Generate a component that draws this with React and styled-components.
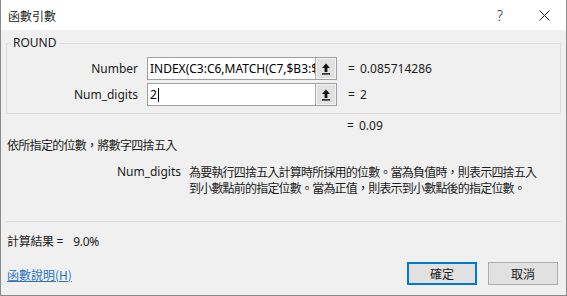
import React from 'react';
import styled, { createGlobalStyle } from 'styled-components';

const GlobalStyle = createGlobalStyle`
  html, body {
    margin: 0;
    padding: 0;
    background: #ffffff;
  }
  body {
    font-family: "Noto Sans", "Noto Sans CJK TC", sans-serif;
    font-size: 12px;
    color: #1b1b1b;
  }
`;

function RefArrow() {
  return (
    <svg width="10" height="12" viewBox="0 0 10 12">
      <path d="M5 0.5 L9 5 L6.4 5 L6.4 9 L3.6 9 L3.6 5 L1 5 Z" fill="#111" />
      <rect x="1" y="10.2" width="8" height="1.4" fill="#111" />
    </svg>
  );
}

function CloseIcon() {
  return (
    <svg width="11" height="11" viewBox="0 0 11 11">
      <path d="M0.5 0.5 L10.5 10.5 M10.5 0.5 L0.5 10.5" stroke="#222" strokeWidth="1" />
    </svg>
  );
}

function ArgInput({ value, caret }) {
  return (
    <InputBox>
      <InputText>
        {value}
        {caret && <Caret />}
      </InputText>
      <RefButton>
        <RefArrow />
      </RefButton>
    </InputBox>
  );
}

export default function App() {
  return (
    <>
      <GlobalStyle />
      <Window>
        <TitleBar>
          <Title>函數引數</Title>
          <TitleTools>
            <HelpGlyph>?</HelpGlyph>
            <CloseIcon />
          </TitleTools>
        </TitleBar>
        <Body>
          <Group>
            <Legend>ROUND</Legend>
            <ArgRow>
              <ArgLabel>Number</ArgLabel>
              <ArgInput value="INDEX(C3:C6,MATCH(C7,$B3:$" />
              <Eq>=</Eq>
              <Value>0.085714286</Value>
            </ArgRow>
            <ArgRow>
              <ArgLabel>Num_digits</ArgLabel>
              <ArgInput value="2" caret />
              <Eq>=</Eq>
              <Value>2</Value>
            </ArgRow>
          </Group>
          <ResultRow>
            <Eq>=</Eq>
            <Value>0.09</Value>
          </ResultRow>
          <Description>依所指定的位數，將數字四捨五入</Description>
          <ArgHelp>
            <ArgHelpLabel>Num_digits</ArgHelpLabel>
            <ArgHelpText>
              為要執行四捨五入計算時所採用的位數。當為負值時，則表示四捨五入
              <br />
              到小數點前的指定位數。當為正值，則表示到小數點後的指定位數。
            </ArgHelpText>
          </ArgHelp>
          <Divider />
          <Formula>
            計算結果 =<FormulaValue>9.0%</FormulaValue>
          </Formula>
          <Footer>
            <HelpLink href="#">函數說明(H)</HelpLink>
            <Buttons>
              <DialogButton $primary>確定</DialogButton>
              <DialogButton>取消</DialogButton>
            </Buttons>
          </Footer>
        </Body>
      </Window>
    </>
  );
}

const Window = styled.div`
  width: 567px;
  height: 296px;
  box-sizing: border-box;
  border: 1px solid #8a8a8a;
  border-top: none;
  background: #f0f0f0;
  display: flex;
  flex-direction: column;
`;

const TitleBar = styled.div`
  height: 30px;
  flex-shrink: 0;
  background: #ffffff;
  display: flex;
  align-items: center;
  justify-content: space-between;
  padding: 0 16px 0 7px;
`;

const Title = styled.div`
  font-family: "Noto Sans CJK TC", sans-serif;
  font-size: 12px;
  color: #222;
`;

const TitleTools = styled.div`
  display: flex;
  align-items: center;
  gap: 36px;
`;

const HelpGlyph = styled.span`
  font-family: "Noto Sans", sans-serif;
  font-size: 14px;
  font-weight: 300;
  color: #222;
`;

const Body = styled.div`
  flex: 1;
  display: flex;
  flex-direction: column;
  padding: 5px 5px 0 5px;
`;

const Group = styled.fieldset`
  margin: 0;
  padding: 6px 0 7px 0;
  border: 1px solid #dcdcdc;
  display: flex;
  flex-direction: column;
  gap: 3px;
`;

const Legend = styled.legend`
  padding: 0 2px;
  margin-left: 4px;
  font-size: 12px;
  line-height: 16px;
  color: #1b1b1b;
`;

const ArgRow = styled.div`
  display: flex;
  align-items: center;
  height: 23px;
`;

const ArgLabel = styled.div`
  width: 140px;
  text-align: right;
  padding-right: 9px;
  box-sizing: border-box;
  flex-shrink: 0;
`;

const InputBox = styled.div`
  width: 190px;
  height: 23px;
  box-sizing: border-box;
  border: 1px solid #a0a0a0;
  background: #ffffff;
  display: flex;
`;

const InputText = styled.div`
  flex: 1;
  overflow: hidden;
  white-space: nowrap;
  padding-left: 2px;
  line-height: 21px;
  font-size: 12px;
  color: #000;
  display: flex;
  align-items: center;
`;

const Caret = styled.span`
  display: inline-block;
  width: 1px;
  height: 14px;
  background: #000;
  margin-left: 1px;
`;

const RefButton = styled.div`
  width: 21px;
  box-sizing: border-box;
  border-left: 1px solid #adadad;
  background: #e1e1e1;
  display: flex;
  align-items: center;
  justify-content: center;
  box-shadow: inset 0 0 0 1px #f4f4f4;
`;

const Eq = styled.span`
  margin-left: 11px;
  width: 12px;
`;

const Value = styled.span`
  margin-left: 0;
`;

const ResultRow = styled.div`
  display: flex;
  align-items: center;
  height: 16px;
  margin-top: 3px;
  padding-left: 330px;
`;

const Description = styled.div`
  font-family: "Noto Sans CJK TC", sans-serif;
  letter-spacing: -0.7px;
  line-height: 16px;
  margin-top: 4px;
  padding-left: 1px;
`;

const ArgHelp = styled.div`
  display: flex;
  margin-top: 11px;
  line-height: 16px;
`;

const ArgHelpLabel = styled.div`
  width: 183px;
  text-align: right;
  padding-right: 8px;
  box-sizing: border-box;
  flex-shrink: 0;
`;

const ArgHelpText = styled.div`
  font-family: "Noto Sans CJK TC", sans-serif;
  letter-spacing: -0.8px;
`;

const Divider = styled.div`
  height: 1px;
  background: #dcdcdc;
  margin-top: 25px;
`;

const Formula = styled.div`
  font-family: "Noto Sans", "Noto Sans CJK TC", sans-serif;
  letter-spacing: -0.3px;
  line-height: 16px;
  margin-top: 12px;
  padding-left: 1px;
`;

const FormulaValue = styled.span`
  margin-left: 10px;
`;

const Footer = styled.div`
  display: flex;
  align-items: center;
  justify-content: space-between;
  margin-top: 12px;
  padding-left: 1px;
  padding-right: 3px;
`;

const HelpLink = styled.a`
  font-family: "Noto Sans CJK TC", sans-serif;
  color: #2a72c9;
  text-decoration: underline;
  line-height: 16px;
  margin-top: 2px;
`;

const Buttons = styled.div`
  display: flex;
  gap: 11px;
`;

const DialogButton = styled.button`
  width: 70px;
  height: 23px;
  padding: 0;
  box-sizing: border-box;
  font-family: "Noto Sans CJK TC", sans-serif;
  font-size: 12px;
  color: #1b1b1b;
  background: #e1e1e1;
  border: 1px solid ${(p) => (p.$primary ? '#0078d7' : '#adadad')};
  box-shadow: ${(p) => (p.$primary ? 'inset 0 0 0 1px #0078d7' : 'none')};
`;
